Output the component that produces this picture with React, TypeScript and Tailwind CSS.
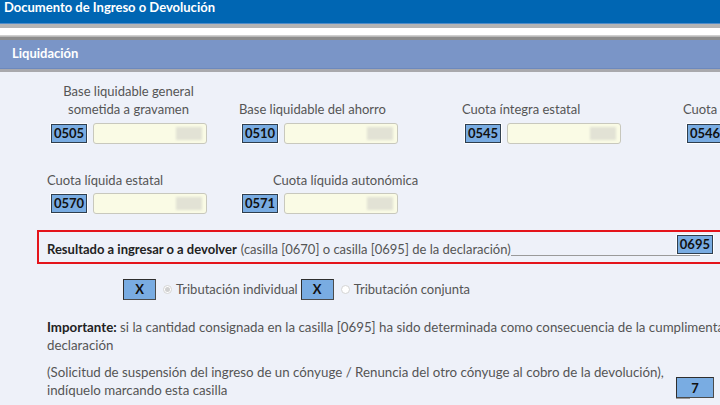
import React from 'react';

const FONT = { fontFamily: 'Lato, "Open Sans", "Liberation Sans", sans-serif' };

const Code: React.FC<{ code: string }> = ({ code }) => (
    <div className="p-[1px] bg-white rounded-[2px] shrink-0">
        <div className="h-[19px] border border-[#2f3e4e] bg-[#79ace2] px-[2px] text-[13px] leading-[15px] font-bold text-[#111] flex items-center">
            {code}
        </div>
    </div>
);

const Amount: React.FC = () => (
    <div className="w-[115px] h-[21px] bg-[#fafbe5] border border-[#c8c8bd] rounded-[3px] flex justify-end items-center pr-[4px]">
        <div className="w-[26px] h-[13px] bg-[#e2e2d5] blur-[1px]" />
    </div>
);

const Field: React.FC<{ code: string }> = ({ code }) => (
    <div className="flex items-center gap-[5px]">
        <Code code={code} />
        <Amount />
    </div>
);

const CheckX: React.FC = () => (
    <div className="w-[33px] h-[21px] bg-[#79ace2] border border-[#4b4b4b] border-t-[#2e2e2e] border-l-[#2e2e2e] flex items-center justify-center text-[13px] font-bold text-[#111]">
        X
    </div>
);

const Radio: React.FC<{ on?: boolean }> = ({ on }) => (
    <div className="w-[9px] h-[9px] rounded-full border border-[#d4d4d4] bg-white flex items-center justify-center mx-[3px]">
        {on && <div className="w-[5px] h-[5px] rounded-full bg-[#d0d0d0]" />}
    </div>
);

export default function App() {
    return (
        <div className="w-[720px] h-[405px] overflow-hidden bg-[#eef1f9]" style={FONT}>
            {/* cabecera */}
            <div className="h-[23px] bg-[#0066b3] px-[4px] text-white font-bold text-[13px] leading-[14px]">
                Documento de Ingreso o Devolución
            </div>
            <div className="h-[1px] bg-[#4f8cc9]" />
            <div className="h-[4px] bg-[#b4b4b4]" />
            <div className="h-[8px] bg-white border-b border-[#cfcfcf]" />
            <div className="h-[4px] bg-[#8c8c8c] border-t border-[#b8b8b8]" />
            <div className="h-[29px] bg-[#7a95c7] border-b border-[#6d89bd] flex items-center px-[12px] text-white font-bold text-[13px]">
                Liquidación
            </div>
            <div className="h-[3px] bg-[#a9a9ad]" />

            <div className="pt-[10px] text-[13px] text-[#555]">
                {/* fila 1 */}
                <div className="flex items-end">
                    <div className="ml-[50px] w-[157px] flex flex-col">
                        <div className="text-center leading-[18px] pb-[5px]">Base liquidable general<br />sometida a gravamen</div>
                        <Field code="0505" />
                    </div>
                    <div className="ml-[34px] w-[157px] flex flex-col">
                        <div className="-ml-[2px] leading-[18px] pb-[5px]">Base liquidable del ahorro</div>
                        <Field code="0510" />
                    </div>
                    <div className="ml-[66px] w-[157px] flex flex-col">
                        <div className="-ml-[2px] leading-[18px] pb-[5px]">Cuota íntegra estatal</div>
                        <Field code="0545" />
                    </div>
                    <div className="ml-[65px] w-[157px] shrink-0 flex flex-col">
                        <div className="-ml-[3px] leading-[18px] pb-[5px]">Cuota íntegra autonómica</div>
                        <Field code="0546" />
                    </div>
                </div>

                {/* fila 2 */}
                <div className="flex items-end mt-[27px]">
                    <div className="ml-[50px] w-[157px] flex flex-col">
                        <div className="-ml-[3px] leading-[18px] pb-[4px]">Cuota líquida estatal</div>
                        <Field code="0570" />
                    </div>
                    <div className="ml-[34px] w-[157px] flex flex-col">
                        <div className="ml-[32px] whitespace-nowrap leading-[18px] pb-[4px]">Cuota líquida autonómica</div>
                        <Field code="0571" />
                    </div>
                </div>

                {/* resultado */}
                <div className="mt-[16px] ml-[37px] w-[687px] h-[34px] border-2 border-[#e4141b] flex pl-[8px] pr-[8px]">
                    <div className="flex items-end pb-[5px] whitespace-nowrap leading-[16px]">
                        <span className="font-bold text-[#222]">Resultado a ingresar o a devolver</span>
                        <span className="ml-[4px]">(casilla [0670] o casilla [0695] de la declaración)</span>
                    </div>
                    <div className="flex-1 mb-[6px] -mr-[24px] self-end border-b border-[#9a9a9a]" />
                    <div className="pt-[2px]">
                        <Code code="0695" />
                    </div>
                </div>

                {/* tributación */}
                <div className="mt-[15px] ml-[123px] flex items-center">
                    <CheckX />
                    <div className="ml-[4px]"><Radio on /></div>
                    <span className="ml-[1px]">Tributación individual</span>
                    <div className="ml-[3px]"><CheckX /></div>
                    <div className="ml-[4px]"><Radio /></div>
                    <span className="ml-[1px]">Tributación conjunta</span>
                </div>

                {/* importante */}
                <div className="mt-[18px] ml-[47px] leading-[18px] text-[13.3px]">
                    <div className="whitespace-nowrap">
                        <span className="font-bold text-[#222]">Importante:</span> si la cantidad consignada en la casilla [0695] ha sido determinada como consecuencia de la cumplimentación de la
                    </div>
                    <div>declaración</div>
                </div>

                <div className="mt-[9px] ml-[47px] flex items-end leading-[18px] text-[13.3px]">
                    <div className="w-[629px]">
                        (Solicitud de suspensión del ingreso de un cónyuge / Renuncia del otro cónyuge al cobro de la devolución),<br />
                        indíquelo marcando esta casilla
                    </div>
                    <div className="flex flex-col">
                        <div className="w-[38px] h-[21px] bg-[#79ace2] border border-[#4b4b4b] border-t-[#2e2e2e] border-l-[#2e2e2e] flex items-center justify-center text-[13px] font-bold text-[#111]">
                            7
                        </div>
                        <div className="w-[14px] h-[1px] bg-[#9a9a9a]" />
                    </div>
                </div>
            </div>
        </div>
    );
}
